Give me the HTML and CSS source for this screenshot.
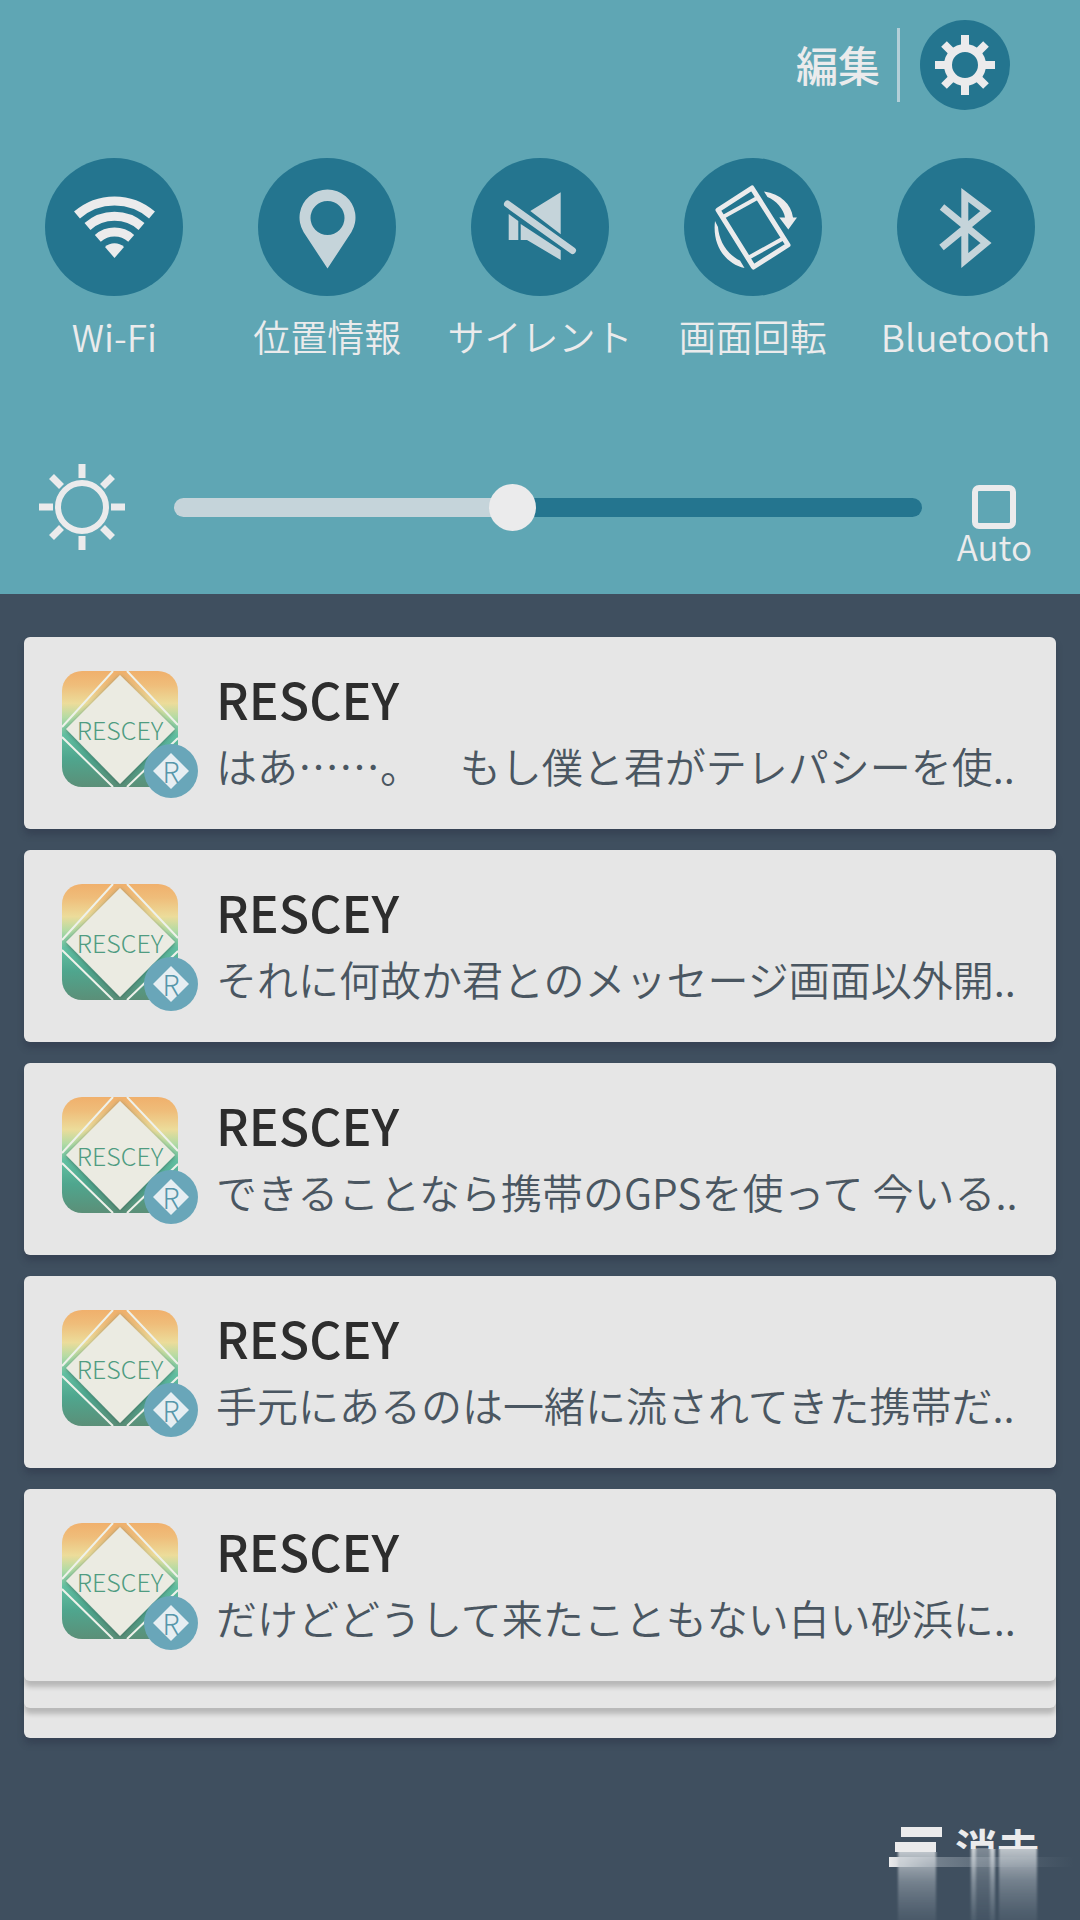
FILE: index.html
```html
<!DOCTYPE html>
<html lang="ja">
<head>
    <meta charset="UTF-8">
    <meta name="viewport" content="width=device-width, initial-scale=1.0">
    <title>通知パネル</title>
    <link rel="stylesheet" href="styles.css">
</head>
<body>
    <!-- Shared app icon -->
    <svg class="defs" width="0" height="0" aria-hidden="true">
        <defs>
            <linearGradient id="iconBg" x1="0" y1="0" x2="0" y2="1">
                <stop offset="0" stop-color="#f0b06c"/>
                <stop offset="0.12" stop-color="#efbd7a"/>
                <stop offset="0.28" stop-color="#ecdc9a"/>
                <stop offset="0.4" stop-color="#b4dba4"/>
                <stop offset="0.55" stop-color="#62c0a2"/>
                <stop offset="0.75" stop-color="#4fa68e"/>
                <stop offset="1" stop-color="#5b8f78"/>
            </linearGradient>
            <filter id="iconShadow" x="-10%" y="-10%" width="120%" height="120%">
                <feDropShadow dx="0" dy="1" stdDeviation="2" flood-color="#2c5548" flood-opacity="0.6"/>
            </filter>
            <clipPath id="iconClip">
                <rect width="116" height="116" rx="20"/>
            </clipPath>
        </defs>
        <symbol id="appIcon" viewBox="0 0 136 128">
            <g clip-path="url(#iconClip)">
                <rect width="116" height="116" fill="url(#iconBg)"/>
                <path d="M58 4L113 58L58 113L4 58Z" fill="#ebebe2" filter="url(#iconShadow)"/>
                <path d="M0 56L51 0M65 0L116 54M0 66L51 116M65 116L116 67" stroke="#eef1ea" stroke-width="2" fill="none"/>
            </g>
            <circle cx="109" cy="100" r="27" fill="#69a6b9"/>
            <path d="M109 82L127 100L109 118L91 100Z" fill="#e6eef2"/>
        </symbol>
    </svg>

    <section class="quick-panel">
        <header class="top-bar">
            <button class="edit-button" type="button">編集</button>
            <button class="settings-button" type="button" aria-label="設定">
                <svg viewBox="0 0 90 90">
                    <circle cx="45" cy="45" r="17" fill="none" stroke="#ebebec" stroke-width="8"/>
                    <path d="M45 15V26M45 64V75M15 45H26M64 45H75M24 24L32 32M58 58L66 66M66 24L58 32M32 58L24 66" stroke="#ebebec" stroke-width="8"/>
                </svg>
            </button>
        </header>

        <div class="toggles">
            <button class="toggle on" type="button">
                <svg viewBox="0 0 138 138">
                    <g fill="none" stroke="currentColor" stroke-width="9">
                        <path d="M32 57A57 57 0 0 1 107 57"/>
                        <path d="M42.500 68.500A41 41 0 0 1 96.500 68.500"/>
                        <path d="M52.800 80.300A25.500 25.500 0 0 1 86.200 80.300"/>
                    </g>
                    <path d="M69.500 100L60 89A14 14 0 0 1 79 89Z" fill="currentColor"/>
                </svg>
                <span>Wi-Fi</span>
            </button>
            <button class="toggle" type="button">
                <svg viewBox="0 0 138 138">
                    <path d="M69.500 110.500L45.500 74A28 28 0 1 1 93.500 74ZM69.500 43A17 17 0 1 0 69.500 77A17 17 0 1 0 69.500 43Z" fill="currentColor" fill-rule="evenodd"/>
                </svg>
                <span>位置情報</span>
            </button>
            <button class="toggle" type="button">
                <svg viewBox="0 0 138 138">
                    <path d="M59.300 53L89.700 34.300V76.300ZM49.700 66L89.700 92.300V102L56 82H49.700ZM37.700 56L47.300 63V82H37.700Z" fill="currentColor"/>
                    <path d="M36.500 46L101.500 92.500" stroke="currentColor" stroke-width="7" stroke-linecap="round"/>
                </svg>
                <span>サイレント</span>
            </button>
            <button class="toggle on" type="button">
                <svg viewBox="0 0 138 138">
                    <g fill="none" stroke="currentColor" stroke-width="5" stroke-linejoin="round">
                        <path d="M68 30L104 87L69.500 109L34 52Z"/>
                        <path d="M39 59L75 39M64 100L100 80" stroke-width="4"/>
                    </g>
                    <path d="M31 63C28 88 42 106 60.500 110L56 102.500C42 96 35 82 34 69ZM80 33.500C97 36 107 46 109 59.500H113L104.300 71.500L95.300 59.500H101C100 52 92 42 83.500 39Z" fill="currentColor"/>
                </svg>
                <span>画面回転</span>
            </button>
            <button class="toggle" type="button">
                <svg viewBox="0 0 138 138">
                    <path d="M45 49L89 85L67.800 102.500V37L89 53L44.500 89.500" fill="none" stroke="currentColor" stroke-width="7"/>
                </svg>
                <span>Bluetooth</span>
            </button>
        </div>

        <div class="brightness">
            <svg class="sun" viewBox="0 0 86 86" aria-hidden="true">
                <g fill="none" stroke="#ebebec">
                    <circle cx="43" cy="43" r="24" stroke-width="6"/>
                    <path d="M43 0V14M43 72V86M0 43H14M72 43H86M12.500 12.500L22.500 22.500M63.500 63.500L73.500 73.500M73.500 12.500L63.500 22.500M22.500 63.500L12.500 73.500" stroke-width="7"/>
                </g>
            </svg>
            <input class="slider" type="range" min="0" max="100" value="45" aria-label="明るさ">
            <label class="auto">
                <input type="checkbox">
                <span>Auto</span>
            </label>
        </div>
    </section>

    <main class="notifications">
        <ul class="list">
            <li class="card">
                <div class="app-icon">
                    <svg><use href="#appIcon"/></svg>
                    <span class="icon-name">RESCEY</span>
                    <span class="icon-letter">R</span>
                </div>
                <div class="content">
                    <h2>RESCEY</h2>
                    <p>はあ……。　&nbsp;&nbsp;もし僕と君がテレパシーを使..</p>
                </div>
            </li>
            <li class="card">
                <div class="app-icon">
                    <svg><use href="#appIcon"/></svg>
                    <span class="icon-name">RESCEY</span>
                    <span class="icon-letter">R</span>
                </div>
                <div class="content">
                    <h2>RESCEY</h2>
                    <p>それに何故か君とのメッセージ画面以外開..</p>
                </div>
            </li>
            <li class="card">
                <div class="app-icon">
                    <svg><use href="#appIcon"/></svg>
                    <span class="icon-name">RESCEY</span>
                    <span class="icon-letter">R</span>
                </div>
                <div class="content">
                    <h2>RESCEY</h2>
                    <p>できることなら携帯のGPSを使って 今いる..</p>
                </div>
            </li>
            <li class="card">
                <div class="app-icon">
                    <svg><use href="#appIcon"/></svg>
                    <span class="icon-name">RESCEY</span>
                    <span class="icon-letter">R</span>
                </div>
                <div class="content">
                    <h2>RESCEY</h2>
                    <p>手元にあるのは一緒に流されてきた携帯だ..</p>
                </div>
            </li>
            <li class="card">
                <div class="app-icon">
                    <svg><use href="#appIcon"/></svg>
                    <span class="icon-name">RESCEY</span>
                    <span class="icon-letter">R</span>
                </div>
                <div class="content">
                    <h2>RESCEY</h2>
                    <p>だけどどうして来たこともない白い砂浜に..</p>
                </div>
            </li>
        </ul>
        <!-- Edges of the cards stacked under the last one -->
        <div class="stack-edge"></div>
        <div class="stack-edge last"></div>
    </main>

    <footer class="footer">
        <button class="clear-button" type="button">
            <svg class="clear-icon" viewBox="0 0 54 40">
                <path d="M12 0H53V10H12ZM6 15H47V25H6Z" fill="#ebebec"/>
            </svg>
            <span>消去</span>
            <!-- Smeared lower half of the button -->
            <svg class="smear" viewBox="0 0 191 93" aria-hidden="true">
                <defs>
                    <linearGradient id="fadeDown" x1="0" y1="0" x2="0" y2="1">
                        <stop offset="0" stop-color="#d5dade" stop-opacity="0.85"/>
                        <stop offset="0.45" stop-color="#a9b3bc" stop-opacity="0.5"/>
                        <stop offset="1" stop-color="#8795a1" stop-opacity="0.15"/>
                    </linearGradient>
                    <linearGradient id="fadeRight" x1="0" y1="0" x2="1" y2="0">
                        <stop offset="0" stop-color="#ebebec"/>
                        <stop offset="0.08" stop-color="#e0e3e6" stop-opacity="0.9"/>
                        <stop offset="0.24" stop-color="#aab4bd" stop-opacity="0.5"/>
                        <stop offset="1" stop-color="#8795a1" stop-opacity="0"/>
                    </linearGradient>
                    <filter id="soft" x="-20%" y="-10%" width="140%" height="120%">
                        <feGaussianBlur stdDeviation="1 0"/>
                    </filter>
                </defs>
                <rect x="60" y="22" width="131" height="71" fill="#3f4f5f"/>
                <rect x="0" y="30" width="185" height="10" fill="url(#fadeRight)"/>
                <g fill="url(#fadeDown)" filter="url(#soft)">
                    <rect x="9" y="25" width="38" height="68"/>
                    <rect x="82" y="22" width="24" height="71" opacity="0.5"/>
                    <rect x="82" y="22" width="5" height="71"/>
                    <rect x="101" y="22" width="5" height="71"/>
                    <rect x="110" y="22" width="38" height="71"/>
                </g>
            </svg>
        </button>
    </footer>
</body>
</html>
```
FILE: styles.css
```css
* {
    margin: 0;
    padding: 0;
    box-sizing: border-box;
}

body {
    font-family: "Noto Sans CJK JP", "Noto Sans", sans-serif;
    font-weight: 350;
    background: #3f4f5f;
    min-height: 100vh;
    display: flex;
    flex-direction: column;
}

button {
    border: none;
    background: none;
    color: #ebebec;
    font-family: inherit;
    cursor: pointer;
}

svg {
    display: block;
}

.defs {
    position: absolute;
}

/* Quick settings */
.quick-panel {
    background: #5fa6b4;
    padding: 20px 0 32px;
}

.top-bar {
    display: flex;
    align-items: center;
    justify-content: flex-end;
    padding-right: 70px;
}

.edit-button {
    height: 74px;
    padding: 0 17px 2px 0;
    border-right: 3px solid #b4cfd8;
    font-size: 42px;
    font-weight: 500;
    line-height: 48px;
}

.settings-button {
    width: 90px;
    height: 90px;
    margin-left: 20px;
    border-radius: 50%;
    background: #24758f;
}

.toggles {
    display: grid;
    grid-template-columns: repeat(5, 1fr);
    padding: 48px 8px 0;
}

.toggle {
    display: flex;
    flex-direction: column;
    align-items: center;
    gap: 16px;
    font-size: 37px;
    font-weight: 350;
    line-height: 48px;
    white-space: nowrap;
}

.toggle svg {
    width: 138px;
    height: 138px;
    border-radius: 50%;
    background: #24758f;
    color: #c5d4da;
}

.toggle.on svg {
    color: #ebebec;
}

.brightness {
    display: flex;
    align-items: flex-start;
    padding: 104px 48px 0 39px;
}

.sun {
    width: 86px;
    height: 86px;
    margin-right: 49px;
}

.slider {
    flex: 1;
    min-width: 0;
    height: 86px;
    margin-right: 35px;
    appearance: none;
    background: none;
}

.slider::-webkit-slider-runnable-track {
    height: 19px;
    border-radius: 10px;
    background: linear-gradient(to right, #c5d4da 45%, #24758f 45%);
}

.slider::-webkit-slider-thumb {
    appearance: none;
    width: 47px;
    height: 47px;
    margin-top: -14px;
    border-radius: 50%;
    background: #ebebec;
}

.auto {
    display: flex;
    flex-direction: column;
    align-items: center;
    padding-top: 21px;
    color: #ebebec;
    font-size: 35px;
    line-height: 33px;
}

.auto input {
    appearance: none;
    width: 44px;
    height: 44px;
    border: 6px solid #ebebec;
    border-radius: 7px;
}

.auto input:checked {
    background: #24758f;
}

/* Notifications */
.notifications {
    padding: 43px 24px 0;
}

.list {
    display: grid;
    gap: 21px;
    list-style: none;
}

.card {
    display: flex;
    align-items: flex-start;
    gap: 18px;
    height: 192px;
    padding: 34px 32px 0 38px;
    border-radius: 6px;
    background: #e6e6e6;
    box-shadow: 0 6px 6px rgba(40, 45, 65, 0.35);
}

.card:last-child {
    position: relative;
    box-shadow: 0 6px 5px rgba(0, 0, 0, 0.2);
}

.app-icon {
    position: relative;
    flex: none;
    width: 136px;
    height: 128px;
}

.app-icon svg {
    width: 100%;
    height: 100%;
}

/* Labels lie over the diamond and the badge */
.icon-name,
.icon-letter {
    position: absolute;
    font-weight: 300;
    text-align: center;
}

.icon-name {
    top: 42px;
    left: 0;
    width: 116px;
    color: #4f9c81;
    font-size: 25px;
    line-height: 32px;
}

.icon-letter {
    right: 0;
    bottom: 12px;
    width: 54px;
    color: #5797ab;
    font-size: 28px;
    line-height: 32px;
}

.content {
    min-width: 0;
}

.content h2 {
    color: #2d2d2d;
    font-size: 50px;
    font-weight: 500;
    line-height: 54px;
}

.content p {
    margin-top: 8px;
    color: #4a5661;
    font-size: 41px;
    line-height: 64px;
    white-space: nowrap;
}

.stack-edge {
    height: 33px;
    margin-top: -6px;
    border-radius: 0 0 6px 6px;
    background: #e6e6e6;
    box-shadow: 0 6px 5px rgba(0, 0, 0, 0.2);
    position: relative;
    z-index: -1;
}

.stack-edge.last {
    height: 36px;
    z-index: -2;
    box-shadow: 0 6px 6px rgba(40, 45, 65, 0.35);
}

/* Clear all */
.footer {
    display: flex;
    justify-content: flex-end;
    margin-top: auto;
}

.clear-button {
    position: relative;
    display: flex;
    align-items: flex-start;
    gap: 12px;
    width: 191px;
    height: 93px;
    font-size: 42px;
    font-weight: 700;
    line-height: 40px;
}

.clear-icon {
    width: 54px;
    height: 40px;
}

.smear {
    position: absolute;
    inset: 0;
    width: 100%;
    height: 100%;
}
```
